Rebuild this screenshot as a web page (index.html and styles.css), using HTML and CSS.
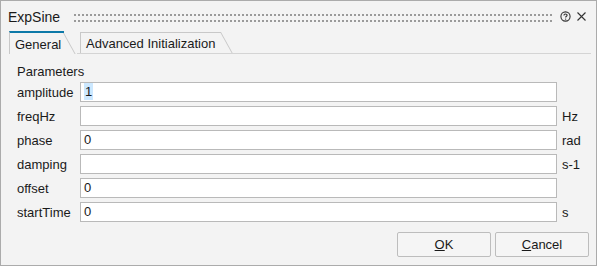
FILE: index.html
```html
<!DOCTYPE html>
<html lang="en">
<head>
  <meta charset="UTF-8" />
  <title>ExpSine</title>
  <link rel="stylesheet" href="styles.css">
</head>
<body>
  <div class="dialog">
    <div class="titlebar">
      <span class="title">ExpSine</span>
      <span class="grip"></span>
      <svg class="icon help" width="11" height="11" viewBox="0 0 11 11">
        <circle cx="5.5" cy="5.5" r="4.6" fill="none" stroke="#333" stroke-width="1.1"/>
        <path d="M3.9 4.4 C3.9 3.4 4.7 3 5.5 3 C6.4 3 7.1 3.5 7.1 4.3 C7.1 5.2 5.6 5.3 5.6 6.6" fill="none" stroke="#333" stroke-width="1.1"/>
        <circle cx="5.6" cy="8.1" r="0.7" fill="#333"/>
      </svg>
      <svg class="icon close" width="11" height="11" viewBox="0 0 11 11">
        <path d="M1.5 1.5 L9.5 9.5 M9.5 1.5 L1.5 9.5" stroke="#333" stroke-width="1.1"/>
      </svg>
    </div>

    <div class="tabs">
      <div class="tab active">General</div>
      <div class="tab-rest">
        <div class="tab">Advanced Initialization</div>
      </div>
    </div>

    <div class="panel">
      <div class="group-title">Parameters</div>
      <div class="params">
        <label>amplitude</label><div class="field"><span class="sel">1</span></div><span class="unit"></span>
        <label>freqHz</label><div class="field"></div><span class="unit">Hz</span>
        <label>phase</label><div class="field">0</div><span class="unit">rad</span>
        <label>damping</label><div class="field"></div><span class="unit">s-1</span>
        <label>offset</label><div class="field">0</div><span class="unit"></span>
        <label>startTime</label><div class="field">0</div><span class="unit">s</span>
      </div>
    </div>

    <div class="buttons">
      <button><u>O</u>K</button>
      <button><u>C</u>ancel</button>
    </div>
  </div>
</body>
</html>
```

FILE: styles.css
```css
body {
  margin: 0;
  font-family: 'Liberation Sans', Arial, sans-serif;
  font-size: 13px;
  color: #1a1a1a;
  background: #f3f3f3;
}
.dialog {
  width: 597px;
  height: 266px;
  box-sizing: border-box;
  border: 1px solid #ababab;
  background: #f3f3f3;
  display: flex;
  flex-direction: column;
}
.titlebar {
  height: 29px;
  display: flex;
  align-items: center;
  padding: 2px 9px 0 7px;
  box-sizing: border-box;
}
.title {
  font-size: 14px;
  margin-right: 14px;
}
.grip {
  flex: 1;
  height: 8px;
  margin-top: 2px;
  background-image: radial-gradient(circle at 1px 1px, #9a9a9a 0.9px, transparent 1.1px);
  background-size: 4px 6px;
}
.icon {
  display: block;
}
.help {
  margin-left: 8px;
}
.close {
  margin-left: 5px;
}
.tabs {
  display: flex;
  align-items: flex-end;
  padding: 0 5px 0 8px;
  height: 24px;
}
.tab {
  position: relative;
  height: 21px;
  line-height: 21px;
  padding: 0 0 0 5px;
  border-top: 1px solid #c8c8c8;
  border-left: 1px solid #c8c8c8;
  box-sizing: border-box;
  white-space: nowrap;
}
.tab::after {
  content: '';
  position: absolute;
  top: -1px;
  right: 0;
  height: calc(100% + 1px);
  border-left: 1px solid #c8c8c8;
  transform: skewX(29deg);
  transform-origin: top left;
}
.tab.active {
  height: 23px;
  line-height: 23px;
  width: 55px;
  border-top: 2px solid #0d79a8;
  margin-right: 13px;
}
.tab.active::after {
  top: 0;
  height: 100%;
}
.tab-rest {
  flex: 1;
  display: flex;
  border-bottom: 1px solid #d4d4d4;
  padding-left: 3px;
}
.tab-rest .tab {
  width: 141px;
}
.panel {
  padding: 10px 0 0 16px;
  flex: 1;
}
.group-title {
  height: 18px;
}
.params {
  display: grid;
  grid-template-columns: 63px 477px auto;
  row-gap: 4px;
  align-items: center;
}
.field {
  height: 20px;
  box-sizing: border-box;
  border: 1px solid #b9b9b9;
  background: #fff;
  padding: 0 3px;
  line-height: 18px;
}
.sel {
  background: #cce8ff;
  padding: 1px 1px;
}
.unit {
  padding-left: 5px;
}
.buttons {
  display: flex;
  justify-content: flex-end;
  gap: 4px;
  padding: 0 7px 8px 0;
}
button {
  width: 94px;
  height: 25px;
  font-family: inherit;
  font-size: 13px;
  color: #1a1a1a;
  background: #f5f5f5;
  border: 1px solid #bdbdbd;
  border-radius: 2px;
}
```
